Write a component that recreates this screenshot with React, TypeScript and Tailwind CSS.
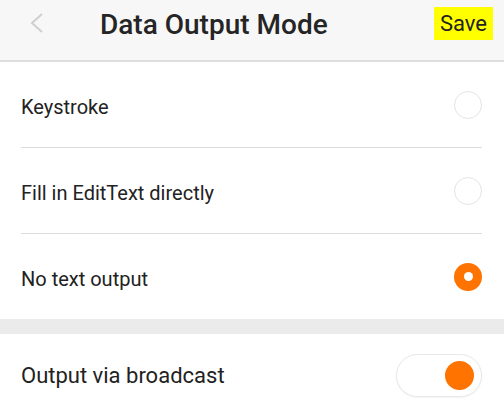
import React from "react";

const options = ["Keystroke", "Fill in EditText directly", "No text output"];

function Radio({ checked }: { checked: boolean }) {
  if (checked) {
    return (
      <div className="flex h-[28px] w-[28px] items-center justify-center rounded-full bg-[#ff7300]">
        <div className="h-[9px] w-[9px] rounded-full bg-white" />
      </div>
    );
  }
  return <div className="h-[28px] w-[28px] rounded-full border border-[#e4e4e4]" />;
}

export default function App() {
  const selected = 2;
  return (
    <div
      className="flex h-[416px] w-[504px] flex-col overflow-hidden bg-white text-[#222]"
      style={{ fontFamily: "Roboto, 'Noto Sans', sans-serif" }}
    >
      <div className="flex h-[62px] shrink-0 items-center border-b-2 border-[#dedede] bg-[#f7f7f7] pb-[14px]">
        <svg className="ml-[29px] h-[20px] w-[16px]" viewBox="0 0 16 20" fill="none">
          <path d="M13 1 L3 10 L13 19" stroke="#cfcfcf" strokeWidth="2" />
        </svg>
        <h1 className="ml-[55px] pt-[4px] text-[28px] font-medium text-[#252525]">
          Data Output Mode
        </h1>
        <div className="ml-auto mr-[11px] flex h-[33px] w-[59px] items-center justify-center bg-[#ffff00] text-[22px] text-[#222]">
          Save
        </div>
      </div>
      <div className="flex flex-col">
        {options.map((label, i) => (
          <div key={label} className="flex flex-col pl-[21px] pr-[22px]">
            <div className="flex h-[85px] items-center justify-between">
              <span className="pt-[4px] text-[20px]">{label}</span>
              <Radio checked={i === selected} />
            </div>
            {i < options.length - 1 && <div className="h-px bg-[#dcdcdc]" />}
          </div>
        ))}
      </div>
      <div className="h-[15px] shrink-0 bg-[#ebebeb]" />
      <div className="flex h-[90px] items-center justify-between pl-[21px] pr-[22px]">
        <span className="text-[22px]">Output via broadcast</span>
        <div className="flex h-[43px] w-[86px] items-center justify-end rounded-full border border-[#e8e8e8] bg-white pr-[7px] shadow-[0_1px_2px_rgba(0,0,0,0.05)]">
          <div className="h-[29px] w-[29px] rounded-full bg-[#ff7300]" />
        </div>
      </div>
    </div>
  );
}
